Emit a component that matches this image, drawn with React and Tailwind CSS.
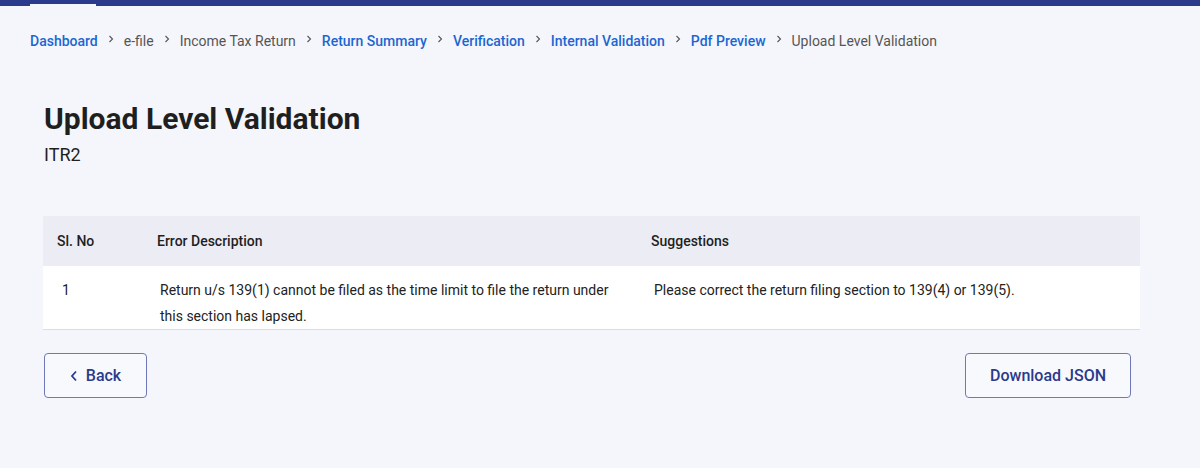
import React from "react";

const crumbs = [
  { t: "Dashboard", link: true },
  { t: "e-file", link: false },
  { t: "Income Tax Return", link: false },
  { t: "Return Summary", link: true },
  { t: "Verification", link: true },
  { t: "Internal Validation", link: true },
  { t: "Pdf Preview", link: true },
  { t: "Upload Level Validation", link: false },
];

function Chev() {
  return (
    <svg width="6" height="8" viewBox="0 0 6 8" className="mx-[10px] mb-[4px]">
      <path d="M1.5 1 L4.5 4 L1.5 7" fill="none" stroke="#555" strokeWidth="1.1" />
    </svg>
  );
}

export default function App() {
  return (
    <div className="w-[1200px] h-[468px] bg-[#f5f6fb] overflow-hidden" style={{ fontFamily: "Roboto, 'Noto Sans', sans-serif" }}>
      <div className="flex h-[6px] bg-[#2b3a8b]">
        <div className="w-[30px]" />
        <div className="w-[66px] h-[2px] mt-[4px] bg-[#f5f6fb]" />
      </div>
      <div className="flex items-center pl-[30px] pt-[26px] text-[14px] leading-[18px]">
        {crumbs.map((c, i) => (
          <React.Fragment key={i}>
            {i > 0 && <Chev />}
            <span className={c.link ? "text-[#1a67d2] font-medium" : "text-[#555]"}>{c.t}</span>
          </React.Fragment>
        ))}
      </div>
      <div className="pl-[44px] pt-[51px]">
        <h1 className="text-[30px] leading-[36px] font-bold text-[#1f1f1f]">Upload Level Validation</h1>
        <div className="text-[18px] leading-[22px] text-[#1f1f1f] mt-[7px]">ITR2</div>
      </div>
      <div className="ml-[43px] mt-[50px] w-[1097px]">
        <div className="flex h-[50px] items-center bg-[#ececf5] text-[14px] font-medium text-[#1f1f1f]">
          <div className="w-[114px] pl-[14px]">Sl. No</div>
          <div className="w-[494px]">Error Description</div>
          <div>Suggestions</div>
        </div>
        <div className="flex bg-white border-b border-[#dcdde3] text-[14px] leading-[26px] text-[#222] pt-[11px]">
          <div className="w-[117px] pl-[19px]">1</div>
          <div className="w-[494px] pr-[20px]">Return u/s 139(1) cannot be filed as the time limit to file the return under this section has lapsed.</div>
          <div>Please correct the return filing section to 139(4) or 139(5).</div>
        </div>
      </div>
      <div className="flex justify-between ml-[44px] w-[1087px] mt-[23px]">
        <button className="flex items-center justify-center gap-[8px] w-[103px] h-[45px] border border-[#6f79b8] rounded-[4px] bg-[#f8f9fd] text-[#2b3a8b] text-[16px] font-medium">
          <svg width="8" height="12" viewBox="0 0 8 12">
            <path d="M6 1.5 L2 6 L6 10.5" fill="none" stroke="#2b3a8b" strokeWidth="1.8" />
          </svg>
          Back
        </button>
        <button className="w-[166px] h-[45px] border border-[#6f79b8] rounded-[4px] bg-[#f8f9fd] text-[#2b3a8b] text-[16px] font-medium">
          Download JSON
        </button>
      </div>
    </div>
  );
}
